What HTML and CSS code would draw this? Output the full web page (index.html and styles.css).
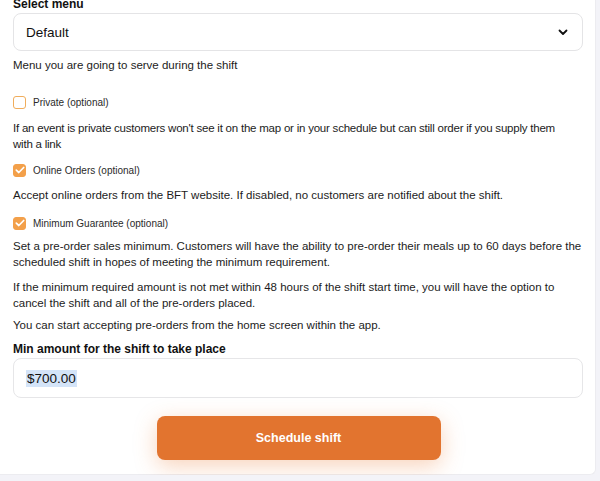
FILE: index.html
```html
<!DOCTYPE html>
<html>
<head>
<meta charset="utf-8">
<link rel="stylesheet" href="styles.css">
</head>
<body>
<div class="card">
  <div class="label label-top">Select menu</div>
  <div class="select">
    <span>Default</span>
    <svg class="chev" width="10" height="7" viewBox="0 0 10 7"><path d="M1.5 1.5 L5 5 L8.5 1.5" fill="none" stroke="#111" stroke-width="1.8" stroke-linecap="round" stroke-linejoin="round"/></svg>
  </div>
  <p class="text t-help">Menu you are going to serve during the shift</p>

  <div class="check-row r-private">
    <span class="box"></span>
    <span class="check-label">Private (optional)</span>
  </div>
  <p class="text t-private">If an event is private customers won't see it on the map or in your schedule but can still order if you supply them with a link</p>

  <div class="check-row r-online">
    <span class="box on"><svg width="10" height="8" viewBox="0 0 10 8"><path d="M1.3 4.2 L3.8 6.5 L8.7 1.5" fill="none" stroke="#fff" stroke-width="1.7" stroke-linecap="round" stroke-linejoin="round"/></svg></span>
    <span class="check-label">Online Orders (optional)</span>
  </div>
  <p class="text t-online">Accept online orders from the BFT website. If disabled, no customers are notified about the shift.</p>

  <div class="check-row r-min">
    <span class="box on"><svg width="10" height="8" viewBox="0 0 10 8"><path d="M1.3 4.2 L3.8 6.5 L8.7 1.5" fill="none" stroke="#fff" stroke-width="1.7" stroke-linecap="round" stroke-linejoin="round"/></svg></span>
    <span class="check-label">Minimum Guarantee (optional)</span>
  </div>
  <p class="text t-min1">Set a pre-order sales minimum. Customers will have the ability to pre-order their meals up to 60 days before the scheduled shift in hopes of meeting the minimum requirement.</p>
  <p class="text t-min2">If the minimum required amount is not met within 48 hours of the shift start time, you will have the option to cancel the shift and all of the pre-orders placed.</p>
  <p class="text t-min3">You can start accepting pre-orders from the home screen within the app.</p>

  <div class="label label-amount">Min amount for the shift to take place</div>
  <div class="input"><span class="sel">$700.00</span></div>

  <div class="btn-wrap">
    <button class="btn">Schedule shift</button>
  </div>
</div>
</body>
</html>
```
FILE: styles.css
```css
html, body {
  margin: 0;
  padding: 0;
  background: #f3f3f8;
  font-family: "Liberation Sans", Arial, sans-serif;
  color: #1a1a1a;
}
.card {
  width: 596px;
  height: 475px;
  background: #fff;
  box-sizing: border-box;
  padding: 0 2px 0 13px;
  display: flex;
  flex-direction: column;
  border-right: 1px solid #ececf0;
  border-bottom: 1px solid #ececf0;
  border-bottom-right-radius: 6px;
}
.label {
  font-weight: bold;
  font-size: 12px;
  line-height: 14px;
  color: #111;
}
.label-top {
  margin-top: -3px;
}
.select {
  margin-top: 2px;
  height: 38px;
  width: 570px;
  box-sizing: border-box;
  border: 1px solid #e4e4e6;
  border-radius: 8px;
  display: flex;
  align-items: center;
  justify-content: space-between;
  padding: 0 14px 0 12px;
  font-size: 13.5px;
  color: #111;
}
.chev {
  display: block;
}
.text {
  margin: 0;
  font-size: 11.5px;
  line-height: 16px;
  color: #1c1c1c;
  width: 572px;
}
.t-help { margin-top: 6px; }
.check-row {
  display: flex;
  align-items: center;
  height: 14px;
}
.box {
  width: 13px;
  height: 13px;
  box-sizing: border-box;
  border: 1.5px solid #f0ad5c;
  border-radius: 3px;
  margin-right: 7px;
  display: flex;
  align-items: center;
  justify-content: center;
}
.box.on {
  background: #f3a04a;
  border-color: #f3a04a;
}
.check-label {
  font-size: 10px;
  color: #2a2a2a;
}
.r-private { margin-top: 22px; }
.t-private { margin-top: 11px; letter-spacing: -0.22px; width: 560px; }
.r-online { margin-top: 11px; }
.t-online { margin-top: 10px; }
.r-min { margin-top: 13px; }
.t-min1 { margin-top: 8px; }
.t-min2 { margin-top: 9px; }
.t-min3 { margin-top: 6px; }
.label-amount { margin-top: 9px; }
.input {
  margin-top: 2px;
  width: 570px;
  height: 40px;
  box-sizing: border-box;
  border: 1px solid #e6e6e8;
  border-radius: 8px;
  display: flex;
  align-items: center;
  padding-left: 12px;
  font-size: 13.5px;
  color: #111;
}
.sel {
  background: #d4e4f8;
  padding: 1px 1px;
}
.btn-wrap {
  display: flex;
  justify-content: center;
  margin-top: 18px;
  padding-right: 9px;
}
.btn {
  width: 284px;
  height: 44px;
  border: none;
  border-radius: 8px;
  background: #e2742f;
  color: #fff;
  font-family: "Liberation Sans", Arial, sans-serif;
  font-weight: bold;
  font-size: 12.5px;
  box-shadow: 0 6px 22px rgba(236, 130, 60, 0.35);
}
```
